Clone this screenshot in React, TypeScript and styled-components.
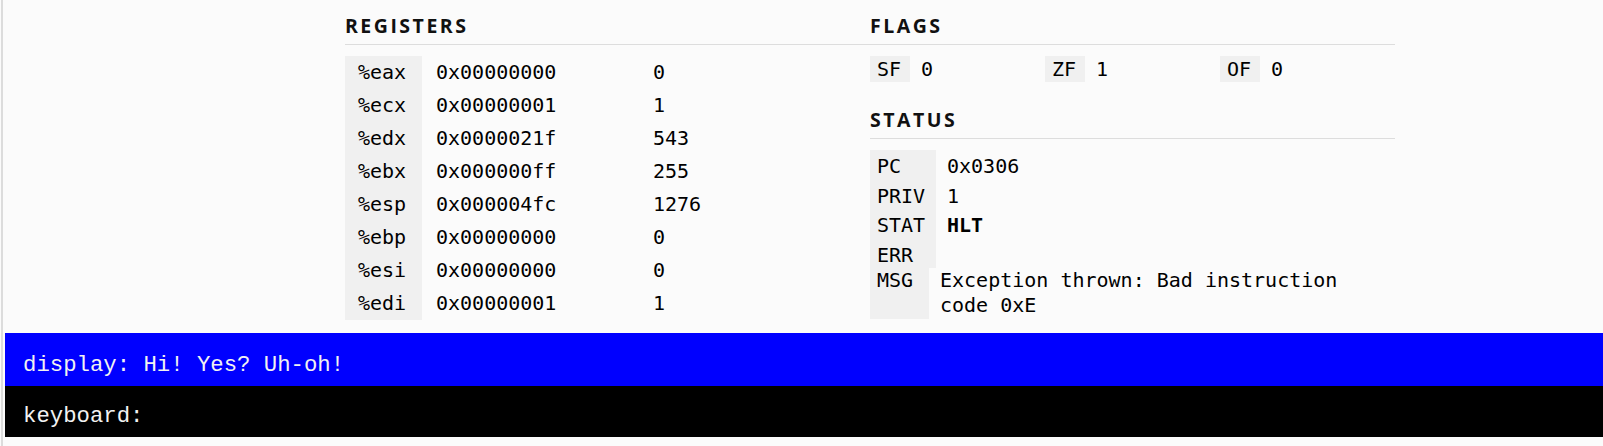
import React from 'react';
import styled, { createGlobalStyle } from 'styled-components';

// Machine state shown in the panel
const REGISTERS = [
    { name: '%eax', hex: '0x00000000', dec: '0' },
    { name: '%ecx', hex: '0x00000001', dec: '1' },
    { name: '%edx', hex: '0x0000021f', dec: '543' },
    { name: '%ebx', hex: '0x000000ff', dec: '255' },
    { name: '%esp', hex: '0x000004fc', dec: '1276' },
    { name: '%ebp', hex: '0x00000000', dec: '0' },
    { name: '%esi', hex: '0x00000000', dec: '0' },
    { name: '%edi', hex: '0x00000001', dec: '1' },
];

const FLAGS = [
    { name: 'SF', value: '0' },
    { name: 'ZF', value: '1' },
    { name: 'OF', value: '0' },
];

const STATUS = [
    { name: 'PC', value: '0x0306', strong: false },
    { name: 'PRIV', value: '1', strong: false },
    { name: 'STAT', value: 'HLT', strong: true },
    { name: 'ERR', value: '', strong: false },
];

const MONO = `"DejaVu Sans Mono", "Liberation Mono", monospace`;
const TERM = `"Liberation Mono", "Courier New", monospace`;

const GlobalStyle = createGlobalStyle`
    html, body {
        margin: 0;
        padding: 0;
        background: #fbfbfb;
    }
    body {
        font-family: ${MONO};
        color: #000;
    }
`;

const Shell = styled.div`
    display: flex;
    min-height: 446px;
`;

/* thin split-pane edge on the far left */
const Rail = styled.div`
    flex: 0 0 5px;
    background: linear-gradient(to right, #fbfbfb 1px, #dcdcdc 1px, #dcdcdc 3px, #fbfbfb 3px);
`;

const Main = styled.div`
    flex: 1;
    display: flex;
    flex-direction: column;
`;

const Panels = styled.div`
    display: grid;
    grid-template-columns: 525px 525px;
    margin-left: 340px;
    padding-top: 14px;
    height: 319px;
    box-sizing: border-box;
`;

const Column = styled.section`
    display: flex;
    flex-direction: column;
`;

const Heading = styled.h2`
    margin: 0;
    font-family: "Open Sans", "Noto Sans", sans-serif;
    font-weight: 700;
    font-size: 19.5px;
    letter-spacing: 2.5px;
    line-height: 24px;
    padding-bottom: 6px;
    border-bottom: 1px solid #dddddd;
    color: #111;
`;

const RegGrid = styled.div`
    margin-top: 11px;
    display: grid;
    grid-template-columns: 77px 217px 1fr;
    font-size: 20px;
    line-height: 33px;
`;

const Label = styled.div<{ $pad: number }>`
    background: #f0f0f0;
    padding-left: ${p => p.$pad}px;
    white-space: nowrap;
`;

const Cell = styled.div<{ $pad: number }>`
    padding-left: ${p => p.$pad}px;
    white-space: nowrap;
`;

const FlagRow = styled.div`
    margin-top: 11px;
    margin-bottom: 26px;
    display: grid;
    grid-template-columns: repeat(3, 175px);
    font-size: 20px;
    line-height: 26px;
`;

const Flag = styled.div`
    display: flex;
    gap: 11px;
`;

const FlagName = styled.span`
    background: #f0f0f0;
    width: 40px;
    padding-left: 7px;
    box-sizing: border-box;
`;

const StatusGrid = styled.div`
    margin-top: 11px;
    display: grid;
    grid-template-columns: 66px 1fr;
    font-size: 20px;
    line-height: 25.5px;
`;

const StatusLabel = styled(Label)`
    padding-top: 4px;
`;

const StatusValue = styled(Cell)<{ $strong: boolean }>`
    padding-top: 4px;
    font-weight: ${p => (p.$strong ? 700 : 400)};
`;

const MsgRow = styled.div`
    display: grid;
    grid-template-columns: 59px 1fr;
    font-size: 20px;
    line-height: 25px;
    min-height: 51px;
`;

const MsgText = styled.div`
    padding-left: 11px;
    padding-right: 8px;
`;

const Band = styled.div<{ $bg: string; $top: number; $bottom: number }>`
    margin-top: ${p => (p.$bg === '#0000ff' ? 14 : 0)}px;
    background: ${p => p.$bg};
    color: #f2f2f2;
    font-family: ${TERM};
    font-size: 22.3px;
    line-height: 25px;
    padding: ${p => p.$top}px 18px ${p => p.$bottom}px;
    white-space: pre;
`;

export default function App() {
    return (
        <>
            <GlobalStyle />
            <Shell>
                <Rail />
                <Main>
                    <Panels>
                        <Column>
                            <Heading>REGISTERS</Heading>
                            <RegGrid>
                                {REGISTERS.map(r => (
                                    <React.Fragment key={r.name}>
                                        <Label $pad={13}>{r.name}</Label>
                                        <Cell $pad={14}>{r.hex}</Cell>
                                        <Cell $pad={14}>{r.dec}</Cell>
                                    </React.Fragment>
                                ))}
                            </RegGrid>
                        </Column>
                        <Column>
                            <Heading>FLAGS</Heading>
                            <FlagRow>
                                {FLAGS.map(f => (
                                    <Flag key={f.name}>
                                        <FlagName>{f.name}</FlagName>
                                        <span>{f.value}</span>
                                    </Flag>
                                ))}
                            </FlagRow>
                            <Heading>STATUS</Heading>
                            <StatusGrid>
                                {STATUS.map(s => (
                                    <React.Fragment key={s.name}>
                                        <StatusLabel $pad={7}>{s.name}</StatusLabel>
                                        <StatusValue $pad={11} $strong={s.strong}>
                                            {s.value || '\u00a0'}
                                        </StatusValue>
                                    </React.Fragment>
                                ))}
                            </StatusGrid>
                            <MsgRow>
                                <Label $pad={7}>MSG</Label>
                                <MsgText>Exception thrown: Bad instruction code 0xE</MsgText>
                            </MsgRow>
                        </Column>
                    </Panels>
                    <Band $bg="#0000ff" $top={20} $bottom={8}>display: Hi! Yes? Uh-oh!</Band>
                    <Band $bg="#000000" $top={18} $bottom={8}>keyboard:</Band>
                </Main>
            </Shell>
        </>
    );
}
